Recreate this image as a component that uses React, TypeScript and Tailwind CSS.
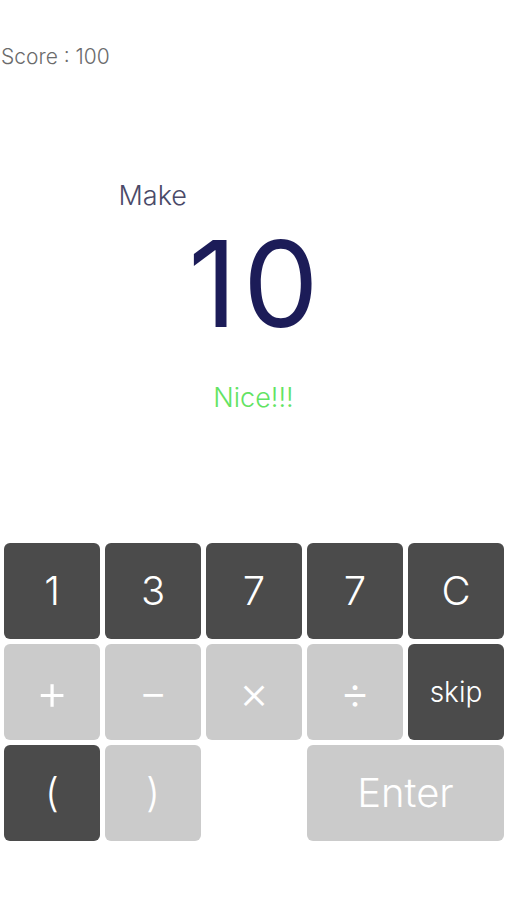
const dark = "bg-[#4b4b4b]";
const light = "bg-[#cbcbcb]";

type Key = { label: string; tone: "dark" | "light" | "none"; size?: string; span?: boolean };

const keys: Key[] = [
  { label: "1", tone: "dark" },
  { label: "3", tone: "dark" },
  { label: "7", tone: "dark" },
  { label: "7", tone: "dark" },
  { label: "C", tone: "dark" },
  { label: "+", tone: "light", size: "text-[50px]" },
  { label: "−", tone: "light", size: "text-[44px]" },
  { label: "×", tone: "light", size: "text-[46px]" },
  { label: "÷", tone: "light", size: "text-[46px]" },
  { label: "skip", tone: "dark", size: "text-[28px]" },
  { label: "(", tone: "dark" },
  { label: ")", tone: "light" },
  { label: "", tone: "none" },
  { label: "Enter", tone: "light", size: "text-[40px]", span: true },
];

const App = () => {
  return (
    <div className="min-h-[900px] w-[507px] bg-white font-['Inter','Liberation_Sans',sans-serif] font-light">
      <div className="pt-[45px] pl-[1px] text-[21px] leading-[24px] text-[#6b6b6b]">Score : 100</div>

      <div className="mx-auto mt-[111px] w-[270px] text-[27px] leading-[32px] text-[#4a4a68]">Make</div>

      <div className="mt-[12px] pl-[6px] text-center text-[120px] leading-[120px] font-normal tracking-[6px] text-[#1c1c58]">
        10
      </div>

      <div className="mt-[38px] text-center text-[27px] leading-[32px] text-[#62e362]">Nice!!!</div>

      <div className="mt-[129px] grid grid-cols-[repeat(5,96px)] gap-[5px] pl-[4px]">
        {keys.map((k, i) =>
          k.tone === "none" ? (
            <div key={i} className="h-[96px]" />
          ) : (
            <button
              key={i}
              className={`flex h-[96px] items-center justify-center rounded-[6px] font-light text-white ${
                k.tone === "dark" ? dark : light
              } ${k.size ?? "text-[40px]"} ${k.span ? "col-span-2" : ""}`}
            >
              {k.label}
            </button>
          )
        )}
      </div>
    </div>
  );
};

export default App;
